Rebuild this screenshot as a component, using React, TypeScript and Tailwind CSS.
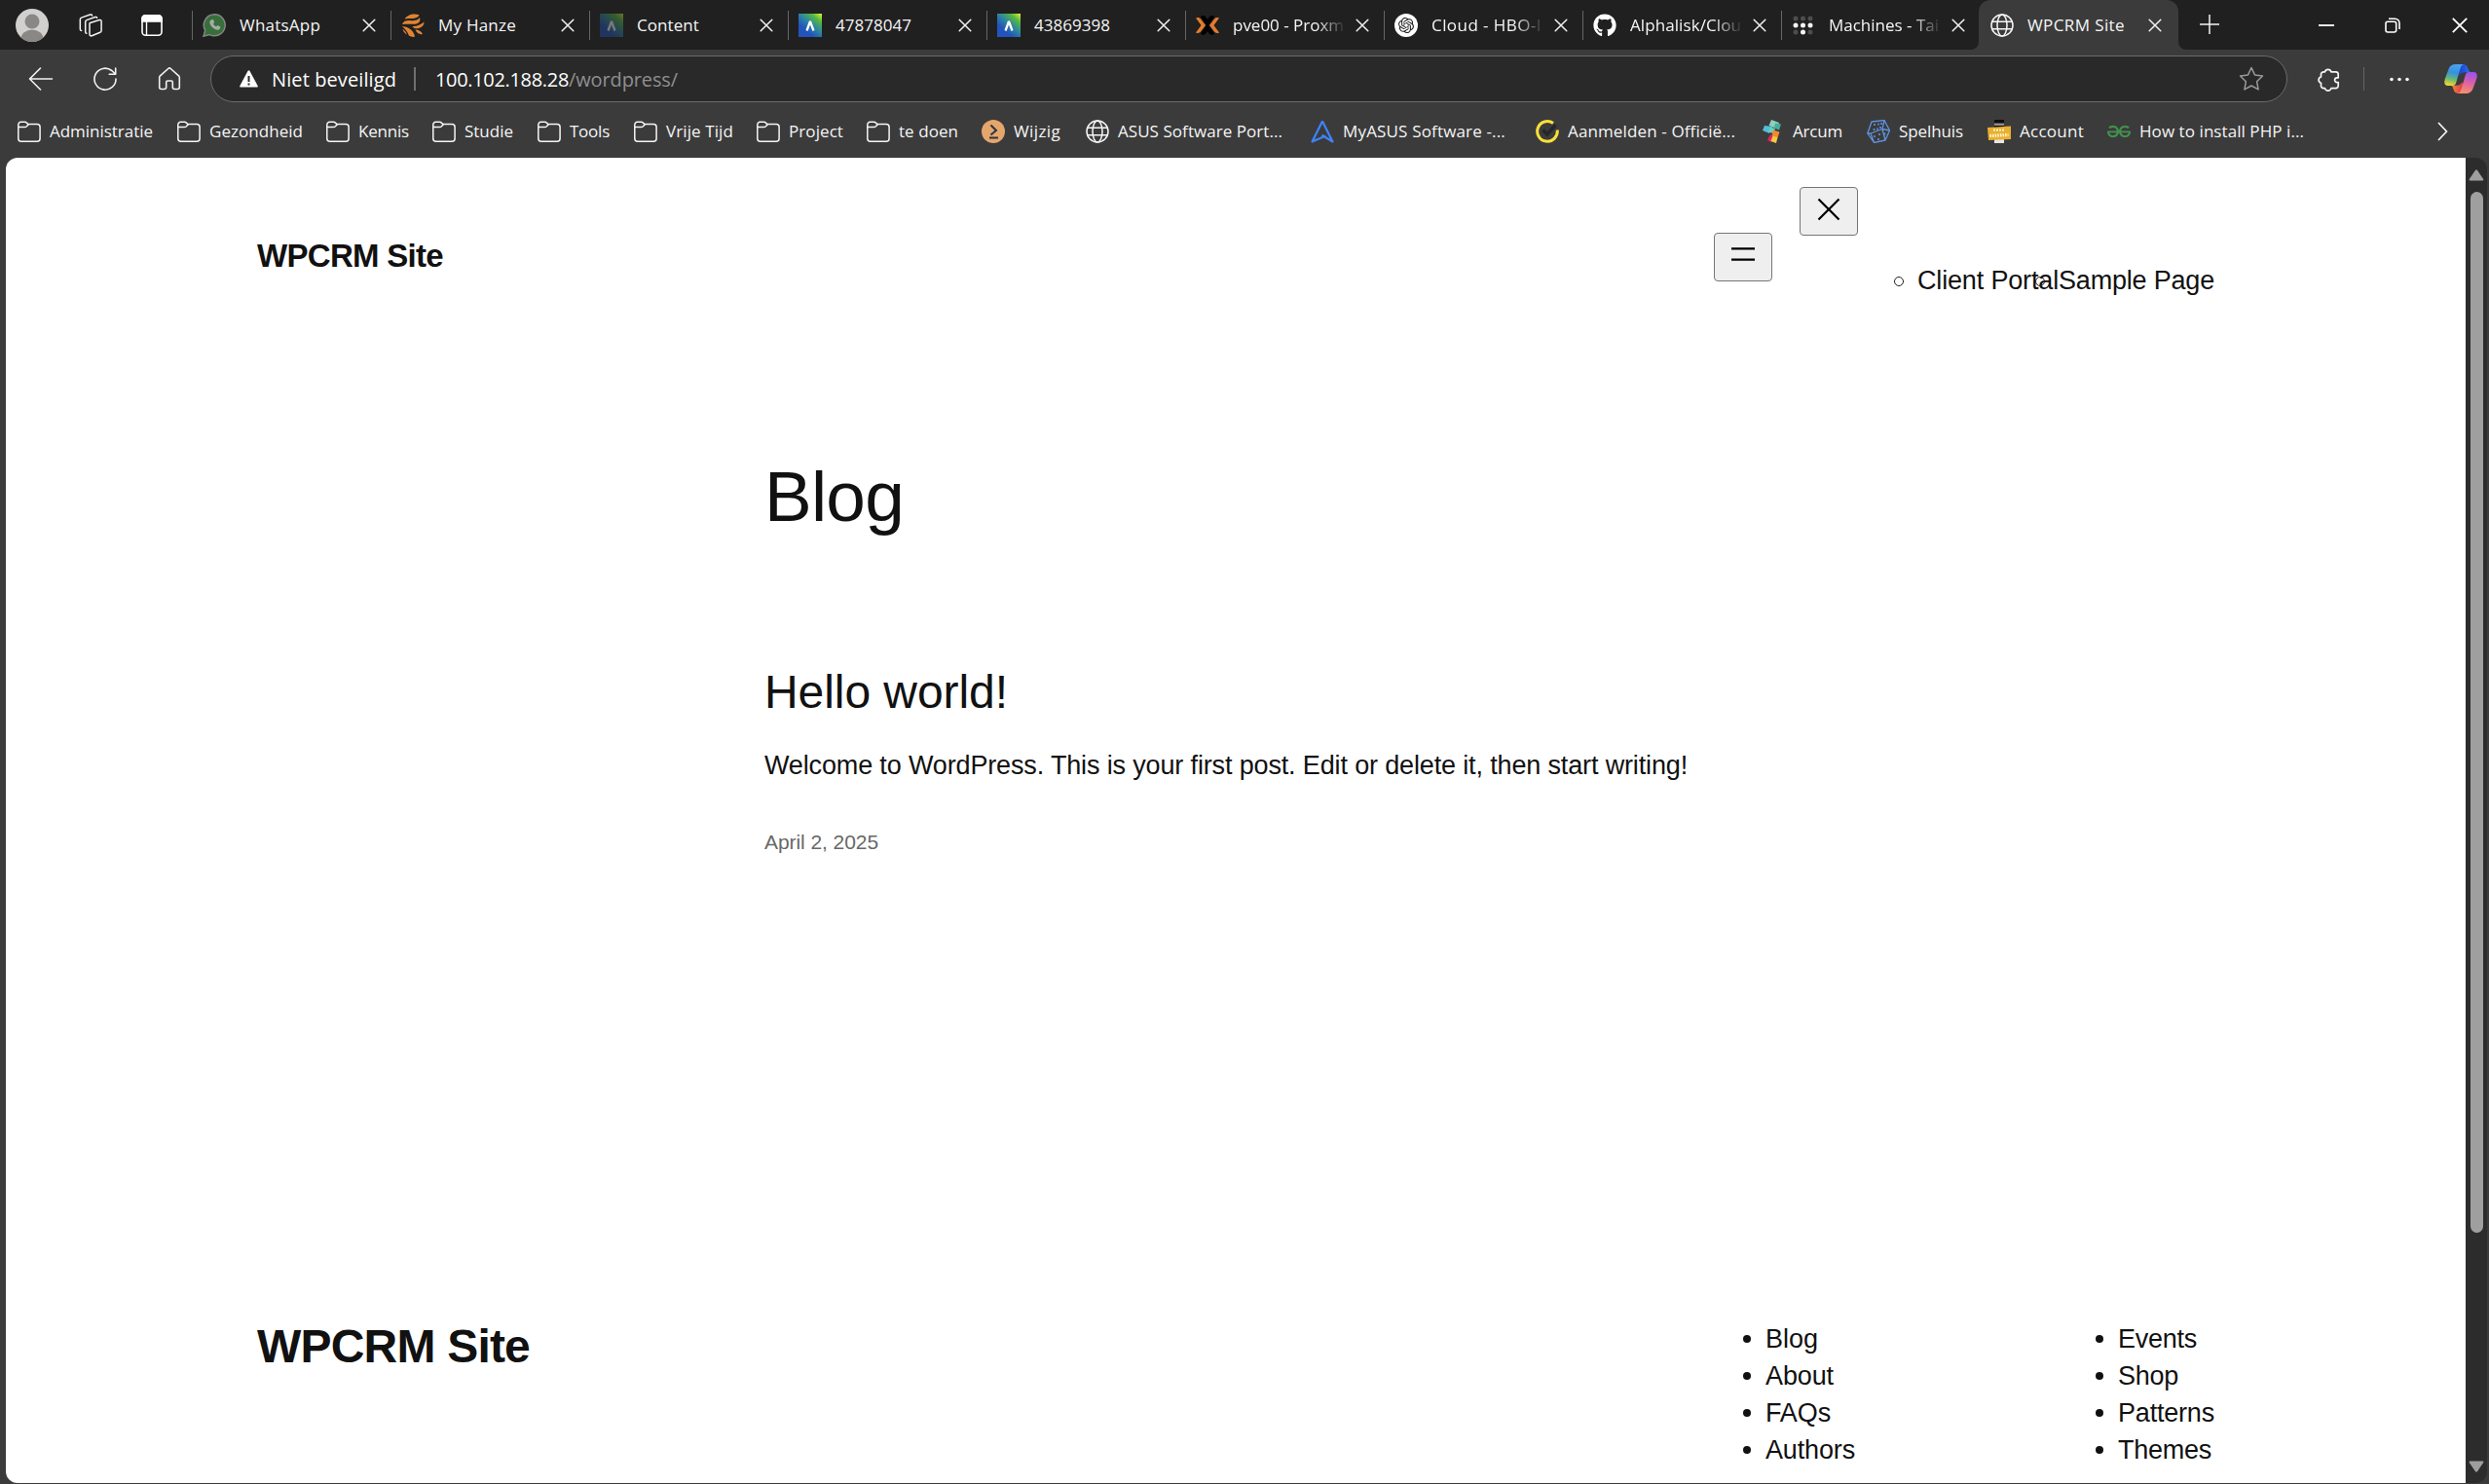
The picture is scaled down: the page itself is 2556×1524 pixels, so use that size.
import { useLayoutEffect, useRef, useState, type ReactNode } from "react";
import { FaGithub } from "react-icons/fa";
import { SiGeeksforgeeks, SiOpenai } from "react-icons/si";

/** A single line of text whose tracking is adjusted so it spans `w` pixels. */
function Fit({ w, children, className = "" }: { w: number; children: string; className?: string }) {
  const ref = useRef<HTMLSpanElement>(null);
  const [spacing, setSpacing] = useState(0);
  useLayoutEffect(() => {
    if (ref.current) {
      const natural = ref.current.getBoundingClientRect().width - spacing * children.length;
      setSpacing((w - natural) / children.length);
    }
  }, [w, children]);
  return (
    <span ref={ref} className={"inline-block whitespace-pre " + className} style={{ letterSpacing: spacing + "px" }}>
      {children}
    </span>
  );
}

function CloseX({ className = "" }: { className?: string }) {
  return (
    <svg className={"h-[14px] w-[14px] " + className} viewBox="0 0 14 14" fill="none" stroke="#f2f2f2" strokeWidth="1.5" strokeLinecap="round">
      <path d="M1.2 1.2 12.8 12.8M12.8 1.2 1.2 12.8" />
    </svg>
  );
}

function Globe() {
  return (
    <svg className="h-6 w-6" viewBox="0 0 24 24" fill="none" stroke="#f5f5f5" strokeWidth="1.5">
      <circle cx="12" cy="12" r="11" />
      <ellipse cx="12" cy="12" rx="5" ry="11" />
      <path d="M2 8.2h20M2 15.8h20" />
    </svg>
  );
}

function Folder() {
  return (
    <svg className="h-6 w-6" viewBox="0 0 24 24" fill="none" stroke="#f5f5f5" strokeWidth="1.5" strokeLinejoin="round">
      <path d="M.8 5.2A2.7 2.7 0 0 1 3.5 2.3h4c.8 0 1.4.3 1.9.8l1.5 1.4h9.2a3 3 0 0 1 3 3v11.7a3 3 0 0 1-3 3H3.8a3 3 0 0 1-3-3V5.2Z" />
      <path d="M.8 7.6h6.7c.8 0 1.4-.3 1.9-.8l2.1-2.2" />
    </svg>
  );
}

function Alpine({ dim = false }: { dim?: boolean }) {
  return (
    <svg className={dim ? "h-6 w-6 opacity-40" : "h-6 w-6"} viewBox="0 0 24 24">
      <defs>
        <linearGradient id="lms" x1="1" y1="0" x2=".35" y2=".75">
          <stop offset="0" stopColor="#e3f23a" />
          <stop offset=".3" stopColor="#56b83f" />
          <stop offset=".65" stopColor="#2c86a0" />
          <stop offset="1" stopColor="#2353bd" />
        </linearGradient>
      </defs>
      <path d="M0 0h24v24H0z" fill="url(#lms)" />
      <path d="M8.5 17.5 12 8l3.5 9.5" fill="none" stroke="#fff" strokeWidth="2.3" strokeLinejoin="bevel" />
    </svg>
  );
}

function WhatsApp() {
  return (
    <span className="relative flex h-6 w-6 items-center justify-center">
      <svg className="absolute inset-0 h-6 w-6" viewBox="0 0 24 24">
        <path d="M12.2.8A11 11 0 0 0 2.7 17.2L1 23.2l6.200-1.600A11 11 0 1 0 12.2.8Z" fill="#366f39" stroke="#858585" strokeWidth="1.5" />
      </svg>
      <svg className="relative h-[13px] w-[13px]" viewBox="0 0 16 16">
        <path d="M4 1.5 5.9 1l1.8 4-1.600 1.700a9 9 0 0 0 4 3.600l1.600-1.800 3.500 1.900c.2 2-1.200 4-3.500 4C6.600 14 1.500 8.500 1.700 4.500 1.800 3 2.800 2 4 1.500Z" fill="#a8a8a8" />
      </svg>
    </span>
  );
}

function Hanze() {
  return (
    <svg className="h-6 w-6" viewBox="0 0 24 24" fill="#e08433">
      <path d="M3.500 5.500C6 1.500 12-.8 18.500 1.200c-.8 2.600-3.800 3.800-7.500 3.800-3 0-5 0-7.500.5zM1 11C2.500 7.500 5.500 6.800 10 7.200c4.500.3 7.500-.7 9-3.200 1.200 4.500-1.500 6.800-6 6.800-4.500 0-7-.5-12 .2z" />
      <path d="M.8 13.200c3.500-.4 7 1 9.700 3.800 2 2 3.200 4.200 3.500 6.800-2 .4-4.200 0-6-1C6.500 18.500 4 15.500.8 13.200zM11.500 13c4.500.3 8-1.500 12-4.500 0 4.500-4 7-8.500 6.800-1.500 0-2.700-1-3.500-2.300zM14.500 16.500c3.500 0 6 1.500 7.500 4.500-3 .8-6-1-7.500-4.500z" />
      <path d="M1.500 16c2 1.200 3.500 3 4.500 5.500C3.800 20.300 2.200 18.500 1.500 16z" />
    </svg>
  );
}

function Proxmox() {
  return (
    <svg className="h-6 w-6" viewBox="0 0 24 24">
      <path d="M5 3.500C6 1.800 8.500 1.500 10 3.200L12 6l2-2.800c1.500-1.700 4-1.400 5 .3L13 12l6 8.500c-1 1.700-3.500 2-5 .3L12 18l-2 2.800c-1.500 1.700-4 1.400-5-.3L11 12Z" fill="#000" />
      <path d="M0 4.500c2-1 4-.5 5.200 1.200L10 12l-4.800 6.300C4 20 2 20.500 0 19.500L5.500 12ZM24 4.500c-2-1-4-.5-5.200 1.200L14 12l4.800 6.300C20 20 22 20.500 24 19.500L18.500 12Z" fill="#e57b2d" />
    </svg>
  );
}

function OpenAi() {
  return (
    <span className="flex h-6 w-6 items-center justify-center rounded-full bg-white">
      <SiOpenai className="h-4 w-4 text-[#202020]" />
    </span>
  );
}

function Tailscale() {
  return (
    <svg className="h-6 w-6" viewBox="0 0 24 24">
      {[5, 12, 19].map((y) =>
        [4, 11.5, 19].map((x) => (
          <circle key={x + "-" + y} cx={x} cy={y} r="2.5" fill={y === 12 || (y === 19 && x === 11.5) ? "#f4f4f4" : "#4d4d4d"} />
        )),
      )}
    </svg>
  );
}

type Tab = { title: string; w: number; icon: ReactNode; fade?: boolean };
const tabs: Tab[] = [
  { title: "WhatsApp", w: 83, icon: <WhatsApp /> },
  { title: "My Hanze", w: 80, icon: <Hanze /> },
  { title: "Content", w: 64, icon: <Alpine dim /> },
  { title: "47878047", w: 78, icon: <Alpine /> },
  { title: "43869398", w: 78, icon: <Alpine /> },
  { title: "pve00 - Proxm", w: 114, icon: <Proxmox />, fade: true },
  { title: "Cloud - HBO-I", w: 113, icon: <OpenAi />, fade: true },
  { title: "Alphalisk/Clou", w: 114, icon: <FaGithub className="h-6 w-6 text-white" />, fade: true },
  { title: "Machines - Tai", w: 113, icon: <Tailscale />, fade: true },
];

function TabStrip() {
  return (
    <div className="flex h-[51px] items-center bg-[#202020]">
      <svg className="ml-4 h-[34px] w-[34px]" viewBox="0 0 34 34">
        <clipPath id="face"><circle cx="17" cy="17" r="17" /></clipPath>
        <circle cx="17" cy="17" r="17" fill="#d2d0ce" />
        <g clipPath="url(#face)" fill="#8a8886">
          <circle cx="17" cy="13" r="7.5" />
          <ellipse cx="17" cy="31" rx="11.5" ry="9.5" />
        </g>
      </svg>
      <svg className="ml-[31px] h-6 w-6" viewBox="0 0 24 24" fill="none" stroke="#f2f2f2" strokeWidth="1.5" strokeLinejoin="round" strokeLinecap="round">
        <path d="m11.5 9.5 9.5-3a1.600 1.600 0 0 1 2.100 1.500v9.500a2 2 0 0 1-1.300 1.800l-8.500 3.400A1.600 1.600 0 0 1 11 21.200V10.200c0-.4.200-.6.500-.7Z" />
        <path d="M7.800 20.300a1.500 1.500 0 0 1-1.100-1.500V8.500c0-.9.5-1.600 1.300-1.900l8.700-3.100c1-.3 1.700 0 1.900.7M2.600 17.500A1.500 1.500 0 0 1 1.300 16V6c0-.9.5-1.600 1.300-1.900L11.500 1c1-.3 1.900.1 2 .9" />
      </svg>
      <svg className="ml-[39px] h-6 w-6" viewBox="0 0 24 24" fill="none" stroke="#fff" strokeWidth="1.6">
        <rect x="2" y="1.8" width="20" height="20.5" rx="3.5" />
        <path d="M2 8V5a3.300 3.300 0 0 1 3.500-3.200h13A3.300 3.300 0 0 1 22 5v3Z" fill="#fff" />
        <path d="M6.5 8v14" strokeWidth="1.4" />
      </svg>
      <div className="ml-[29px] flex h-full items-center">
        {tabs.map((t) => (
          <div key={t.title} className="flex h-full w-[204px] items-center">
            <div className="mr-[10px] h-[30px] w-px bg-[#666]" />
            {t.icon}
            <div className={t.fade ? "ml-[14px] w-[115px] [mask-image:linear-gradient(to_right,black_86px,transparent_116px)]" : "ml-[14px] w-[115px]"}>
              <Fit w={t.w} className="text-[17px] leading-[30px]">{t.title}</Fit>
            </div>
            <CloseX className="ml-[11px]" />
          </div>
        ))}
        <div className="relative -ml-px flex h-full w-[205px] items-center rounded-t-[12px] bg-[#3b3b3b]">
          <svg className="absolute bottom-0 -left-2 h-2 w-2" viewBox="0 0 8 8"><path d="M8 0v8H0a8 8 0 0 0 8-8Z" fill="#3b3b3b" /></svg>
          <svg className="absolute -right-2 bottom-0 h-2 w-2" viewBox="0 0 8 8"><path d="M0 0v8h8a8 8 0 0 1-8-8Z" fill="#3b3b3b" /></svg>
          <span className="ml-[12px] flex"><Globe /></span>
          <div className="ml-[14px] w-[113px]">
            <Fit w={100} className="text-[17px] leading-[30px]">WPCRM Site</Fit>
          </div>
          <CloseX className="ml-[11px]" />
        </div>
        <svg className="-mt-px ml-[21px] h-[22px] w-[22px]" viewBox="0 0 22 22" stroke="#f2f2f2" strokeWidth="1.5"><path d="M11 1v20M1 11h20" /></svg>
      </div>
      <svg className="ml-[101px] h-4 w-4" viewBox="0 0 16 16" stroke="#fff" strokeWidth="1.8"><path d="M0 8h16" /></svg>
      <svg className="ml-[52px] h-4 w-4" viewBox="0 0 16 16" fill="none" stroke="#fff" strokeWidth="1.6">
        <rect x="1" y="4.3" width="10.700" height="10.700" rx="2" />
        <path d="M4 1.200h6.500a4.500 4.500 0 0 1 4.500 4.500V12" />
      </svg>
      <svg className="ml-[53px] h-4 w-4" viewBox="0 0 16 16" stroke="#fff" strokeWidth="1.8"><path d="m.8.8 14.400 14.400M15.200.8.8 15.200" /></svg>
    </div>
  );
}

function Copilot() {
  return (
    <svg className="ml-[33px] h-[30px] w-[34px]" viewBox="0 0 34 30">
      <defs>
        <linearGradient id="cpLeft" x1=".6" y1="0" x2=".4" y2="1"><stop offset="0" stopColor="#4aa5ee" /><stop offset=".4" stopColor="#3790dc" /><stop offset=".7" stopColor="#63b77b" /><stop offset="1" stopColor="#f1d52f" /></linearGradient>
        <linearGradient id="cpRight" x1=".4" y1="1" x2=".6" y2="0"><stop offset="0" stopColor="#9a52f2" /><stop offset=".5" stopColor="#dd629f" /><stop offset="1" stopColor="#f8926a" /></linearGradient>
        <linearGradient id="cpTop" x1="0" y1="0" x2="1" y2="0"><stop offset="0" stopColor="#1c3fc4" /><stop offset=".5" stopColor="#2257de" /><stop offset="1" stopColor="#2f7df0" /></linearGradient>
        <linearGradient id="cpBottom" x1="0" y1="0" x2="1" y2="0"><stop offset="0" stopColor="#d63a3f" /><stop offset="1" stopColor="#f78a45" /></linearGradient>
      </defs>
      <path d="M18 0c4.500 0 6 2 6.700 5 .5 2 1.500 3.200 3.300 3.200h-6c-3.500 0-5 1-6.200 3.500L14 9l3-9Z" fill="url(#cpTop)" />
      <path d="M18 0c4.500 0 6 2 6.700 5 .5 2 1.500 3.200 3.300 3.200h-6c-3.500 0-5 1-6.200 3.500L14 9l3-9Z" transform="rotate(180 17 15)" fill="url(#cpBottom)" />
      <path d="M12 0h8.500c-2.700 0-3.500 3-4.500 6l-3.500 12c-.8 2.500-1.500 4-4 4H4C0 22-.3 18.500.8 15L4.500 5C5.800 1.500 8 0 12 0Z" fill="url(#cpLeft)" />
      <path d="M12 0h8.500c-2.700 0-3.500 3-4.500 6l-3.500 12c-.8 2.500-1.500 4-4 4H4C0 22-.3 18.500.8 15L4.500 5C5.800 1.500 8 0 12 0Z" transform="rotate(180 17 15)" fill="url(#cpRight)" />
    </svg>
  );
}

function Toolbar() {
  return (
    <div className="flex h-[60px] items-center text-[20px]">
      <svg className="ml-[29px] h-6 w-[26px]" viewBox="0 0 26 24" fill="none" stroke="#f2f2f2" strokeWidth="1.6" strokeLinecap="round" strokeLinejoin="round">
        <path d="M24.500 12H1.500M12.500 1 1.500 12l11 11" />
      </svg>
      <svg className="ml-[41px] h-6 w-6" viewBox="0 0 24 24" fill="none" stroke="#f2f2f2" strokeWidth="1.6" strokeLinecap="round" strokeLinejoin="round">
        <path d="M23 12A11 11 0 1 1 18.800 3.500L22.500 7M22.700 1v6.300h-6.500" />
      </svg>
      <svg className="ml-[42px] h-6 w-6" viewBox="0 0 24 24" fill="none" stroke="#f2f2f2" strokeWidth="1.6" strokeLinejoin="round">
        <path d="M10.700 1.500a2 2 0 0 1 2.600 0l8.200 7.300c.5.500.8 1.100.8 1.800v9.900a2 2 0 0 1-2 2h-3a2 2 0 0 1-2-2v-5a1.500 1.500 0 0 0-1.500-1.500h-3.600a1.500 1.500 0 0 0-1.500 1.500v5a2 2 0 0 1-2 2h-3a2 2 0 0 1-2-2v-9.900c0-.7.300-1.300.8-1.800Z" />
      </svg>
      <div className="ml-[30px] flex h-12 w-[2133px] items-center rounded-full border-[1.5px] border-[#6b6b6b] bg-[#292929]">
        <svg className="ml-[29px] h-[18px] w-[19px]" viewBox="0 0 19 18">
          <path d="M8.600.8c.5-.8 1.300-.8 1.800 0l8.200 15.300c.4.800 0 1.500-.8 1.500H1.200c-.8 0-1.200-.7-.8-1.500Z" fill="#fff" />
          <path d="M9.500 6v6M9.500 13.500v2" stroke="#292929" strokeWidth="2" />
        </svg>
        <Fit w={128} className="ml-[14px] pt-[2px] leading-7 text-white">Niet beveiligd</Fit>
        <div className="ml-[18px] h-6 w-[2px] bg-[#6f6f6f]" />
        <Fit w={137} className="ml-[20px] pt-[2px] leading-7 text-white">100.102.188.28</Fit>
        <Fit w={112} className="pt-[2px] leading-7 text-[#8f8f8f]">/wordpress/</Fit>
        <svg className="mr-[23px] ml-auto h-[26px] w-[26px]" viewBox="0 0 26 26" fill="none" stroke="#9a9a9a" strokeWidth="1.5" strokeLinejoin="round">
          <path d="m13 1.500 3.500 7.400 8 1.100-5.900 5.700 1.500 8.200L13 20l-7.100 3.900 1.500-8.200L1.500 10l8-1.100Z" />
        </svg>
      </div>
      <svg className="mt-px ml-[30px] h-6 w-6" viewBox="0 0 24 24" fill="none" stroke="#f5f5f5" strokeWidth="1.7" strokeLinejoin="round">
        <path d="M8.500 3.800a3.300 3.300 0 0 1 6.400 0h4.800a2.500 2.500 0 0 1 2.500 2.500v3.500h-1.200a2.400 2.400 0 0 0 0 4.800h1.200v3.500a2.500 2.500 0 0 1-2.500 2.500h-4.800a3.300 3.300 0 0 1-6.400 0H7a2.500 2.500 0 0 1-2.500-2.500v-2.900a3.200 3.200 0 0 1 0-6.200V6.300A2.500 2.500 0 0 1 7 3.800Z" />
      </svg>
      <div className="ml-[24px] h-6 w-px bg-[#666]" />
      <svg className="ml-[25px] h-6 w-6" viewBox="0 0 24 24" fill="#f5f5f5"><circle cx="3" cy="12.500" r="1.8" /><circle cx="11" cy="12.500" r="1.8" /><circle cx="19" cy="12.500" r="1.8" /></svg>
      <Copilot />
    </div>
  );
}

function Wijzig() {
  return (
    <svg className="h-6 w-6" viewBox="0 0 24 24">
      <circle cx="12" cy="12" r="12" fill="#e5a66c" />
      <path d="M9.500 5.500 15 11l-5.500 4.500M8 18.500h9" fill="none" stroke="#2d3442" strokeWidth="2" />
    </svg>
  );
}

function MyAsus() {
  return (
    <svg className="h-6 w-6" viewBox="0 0 24 24" fill="none" stroke="#3f83f8" strokeWidth="2.2" strokeLinejoin="round">
      <path d="M12 1.500 1.500 22.500l14-6M12 1.500l10.500 21-11-6.700" />
    </svg>
  );
}

function Norton() {
  return (
    <svg className="h-6 w-6" viewBox="0 0 24 24" fill="none">
      <path d="M18 3.500a10.300 10.300 0 1 0 4.200 7" stroke="#f7e03b" strokeWidth="3" />
      <path d="m7.500 10.500 4.200 4.500 8.800-9.500" stroke="#262626" strokeWidth="3.500" />
    </svg>
  );
}

function Arcum() {
  return (
    <svg className="h-6 w-6" viewBox="0 0 24 24">
      <path d="m11 0 8 3-2.500 6-8-3Z" fill="#8fd0bd" />
      <path d="m15 3.500 6 1-2 6-5-2Z" fill="#45ae9c" />
      <path d="m4 6 8 1-3 7-7-3Z" fill="#53bfd6" />
      <path d="m10 7.500 5 1.500-2 5-5-1.500Z" fill="#6ccfbd" />
      <path d="m13 10.500 6.500 2-2 6-6-2Z" fill="#f08a33" />
      <path d="m10 15 3 2-2 6-4-2Z" fill="#e0265f" />
      <path d="m12.500 16.500 5 1.500L16 24l-5.500-2Z" fill="#f9c841" />
    </svg>
  );
}

function Dice() {
  return (
    <svg className="h-6 w-6" viewBox="0 0 24 24" fill="none" stroke="#5f93df" strokeWidth="1.3" strokeLinejoin="round">
      <path d="m5 2 13-1.500L23.500 11 19 21 7.500 23.500.8 14ZM4 14H.8M4 14l12-4.500L18 .5M16 9.500 19 21M4 14l3.500 9.500M16 9.500l7.500 1.500" />
      <path d="M8 4v2M12 3.500v2M15 3v2M7.500 9v2M11 8.500v2M14 7v2M8 16v2M13 14v2M12 19v2M18.500 13.500v2" strokeWidth="1.6" />
    </svg>
  );
}

function ComicCon() {
  return (
    <svg className="h-6 w-6" viewBox="0 0 24 24">
      <path d="M7 0h10v8H7z" fill="#0c0c0c" />
      <path d="M7 3.500h10V6H7z" fill="#8f8f8f" />
      <path d="M7 20h10v4H7z" fill="#e6e6e6" />
      <path d="m0 8 24-1.500V20L1 21Z" fill="#eab02f" />
      <path d="M6 10.500h12" stroke="#fff3c9" strokeWidth="1.8" strokeDasharray="2 1" />
      <path d="m2.500 16.500 19-1" stroke="#fff3d0" strokeWidth="3.2" strokeDasharray="1.600 1" />
    </svg>
  );
}

type Bookmark = { title: string; w: number; gap: string; icon: ReactNode };
const bookmarks: Bookmark[] = [
  { title: "Administratie", w: 106, gap: "mr-[25px]", icon: <Folder /> },
  { title: "Gezondheid", w: 96, gap: "mr-[24px]", icon: <Folder /> },
  { title: "Kennis", w: 52, gap: "mr-[24px]", icon: <Folder /> },
  { title: "Studie", w: 50, gap: "mr-[25px]", icon: <Folder /> },
  { title: "Tools", w: 41, gap: "mr-[25px]", icon: <Folder /> },
  { title: "Vrije Tijd", w: 69, gap: "mr-[24px]", icon: <Folder /> },
  { title: "Project", w: 56, gap: "mr-[24px]", icon: <Folder /> },
  { title: "te doen", w: 61, gap: "mr-[24px]", icon: <Folder /> },
  { title: "Wijzig", w: 48, gap: "mr-[26px]", icon: <Wijzig /> },
  { title: "ASUS Software Port...", w: 169, gap: "mr-[29px]", icon: <Globe /> },
  { title: "MyASUS Software -...", w: 167, gap: "mr-[31px]", icon: <MyAsus /> },
  { title: "Aanmelden - Officië...", w: 172, gap: "mr-[26px]", icon: <Norton /> },
  { title: "Arcum", w: 51, gap: "mr-[25px]", icon: <Arcum /> },
  { title: "Spelhuis", w: 66, gap: "mr-[25px]", icon: <Dice /> },
  { title: "Account", w: 66, gap: "mr-[24px]", icon: <ComicCon /> },
  { title: "How to install PHP i...", w: 169, gap: "mr-auto", icon: <SiGeeksforgeeks className="h-6 w-6 text-[#43914d]" /> },
];

function BookmarkBar() {
  return (
    <div className="flex h-[51px] items-center pr-[42px] pb-[3px] pl-[18px]">
      {bookmarks.map((b) => (
        <div key={b.title} className={"flex items-center gap-[9px] " + b.gap}>
          {b.icon}
          <Fit w={b.w} className="text-[17px] leading-[30px]">{b.title}</Fit>
        </div>
      ))}
      <svg className="h-5 w-3" viewBox="0 0 12 20" fill="none" stroke="#f5f5f5" strokeWidth="1.7"><path d="m2 1 8.500 9L2 19" /></svg>
    </div>
  );
}

function FooterList({ items }: { items: [string, number][] }) {
  return (
    <ul>
      {items.map(([label, w]) => (
        <li key={label} className="flex h-[38px] items-center">
          <span className="mr-[15px] h-2 w-2 rounded-full bg-[#111]" />
          <Fit w={w} className="text-[27px] leading-[38px]">{label}</Fit>
        </li>
      ))}
    </ul>
  );
}

function Ring({ className }: { className: string }) {
  return <span className={"h-[10px] w-[10px] rounded-full border border-[#222] " + className} />;
}

function Page() {
  return (
    <div className="flex flex-1 flex-col overflow-hidden rounded-l-[12px] bg-white pl-[258px] text-[#111] [font-family:'Liberation_Sans',Arial,sans-serif]">
      <header className="flex h-[292px] items-start">
        <Fit w={191} className="mt-[81px] text-[33px] leading-[40px] font-bold">WPCRM Site</Fit>
        <button className="mt-[77px] mr-[28px] ml-auto flex h-[50px] w-[60px] justify-center rounded-[4px] border-[1.5px] border-[#767676] bg-[#efefef] pt-[3px]">
          <svg className="h-9 w-9" viewBox="0 0 24 24" fill="#000"><path d="M4 7.500h16v1.500H4zM4 15h16v1.500H4z" /></svg>
        </button>
        <button className="mt-[30px] mr-[37px] flex h-[50px] w-[60px] justify-center rounded-[4px] border-[1.5px] border-[#767676] bg-[#efefef] pt-[4px]">
          <svg className="h-9 w-9" viewBox="0 0 24 24" fill="#000"><path d="m13.060 12 6.470-6.470-1.060-1.060L12 10.940 5.530 4.470 4.470 5.530 10.940 12l-6.470 6.470 1.060 1.060L12 13.060l6.470 6.470 1.060-1.060L13.060 12Z" /></svg>
        </button>
        <nav className="mt-[107px] mr-[258px] flex h-[38px] items-center text-[27px] leading-[38px]">
          <Ring className="mt-px mr-[14px]" />
          <Fit w={145}>Client Portal</Fit>
          <span className="relative">
            <Ring className="absolute top-[15px] -left-6" />
            <Fit w={160}>Sample Page</Fit>
          </span>
        </nav>
      </header>
      <main className="flex h-[902px] flex-col items-start pl-[521px]">
        <Fit w={143} className="mt-[13px] text-[73px] leading-[86px]">Blog</Fit>
        <Fit w={250} className="mt-[128px] text-[48px] leading-[60px]">Hello world!</Fit>
        <Fit w={948} className="mt-[26px] text-[27px] leading-[38px]">Welcome to WordPress. This is your first post. Edit or delete it, then start writing!</Fit>
        <Fit w={117} className="mt-[45px] text-[21px] leading-[30px] text-[#686868]">April 2, 2025</Fit>
      </main>
      <footer className="flex items-start">
        <Fit w={280} className="-mt-[3px] text-[48px] leading-[60px] font-bold">WPCRM Site</Fit>
        <div className="mr-[258px] ml-auto flex">
          <div className="w-[362px]">
            <FooterList items={[["Blog", 54], ["About", 70], ["FAQs", 67], ["Authors", 92]]} />
          </div>
          <div>
            <FooterList items={[["Events", 81], ["Shop", 62], ["Patterns", 99], ["Themes", 96]]} />
          </div>
        </div>
      </footer>
    </div>
  );
}

function Scrollbar() {
  return (
    <div className="flex w-[22px] flex-col items-center rounded-r-[12px] bg-[#2c2c2c]">
      <svg className="mt-[12px] h-3 w-4" viewBox="0 0 16 12"><path d="M6.900 1a1.400 1.400 0 0 1 2.200 0l6 8.800c.6.900.2 1.700-.8 1.700H1.700c-1 0-1.400-.8-.8-1.700Z" fill="#9f9f9f" /></svg>
      <div className="mt-[11px] h-[1069px] w-[13px] rounded-full bg-[#9f9f9f]" />
      <svg className="mt-auto mb-[11px] h-3 w-4" viewBox="0 0 16 12"><path d="M6.900 11a1.400 1.400 0 0 0 2.200 0l6-8.800c.6-.9.200-1.700-.8-1.700H1.700c-1 0-1.400.8-.8 1.700Z" fill="#9f9f9f" /></svg>
    </div>
  );
}

export default function App() {
  return (
    <div className="flex h-[1524px] w-[2556px] flex-col overflow-hidden bg-[#3b3b3b] text-[#f5f5f5] [font-family:'Open_Sans','Noto_Sans',sans-serif]">
      <TabStrip />
      <Toolbar />
      <BookmarkBar />
      <div className="flex h-[1361px] pr-[2px] pl-[6px]">
        <Page />
        <Scrollbar />
      </div>
    </div>
  );
}
